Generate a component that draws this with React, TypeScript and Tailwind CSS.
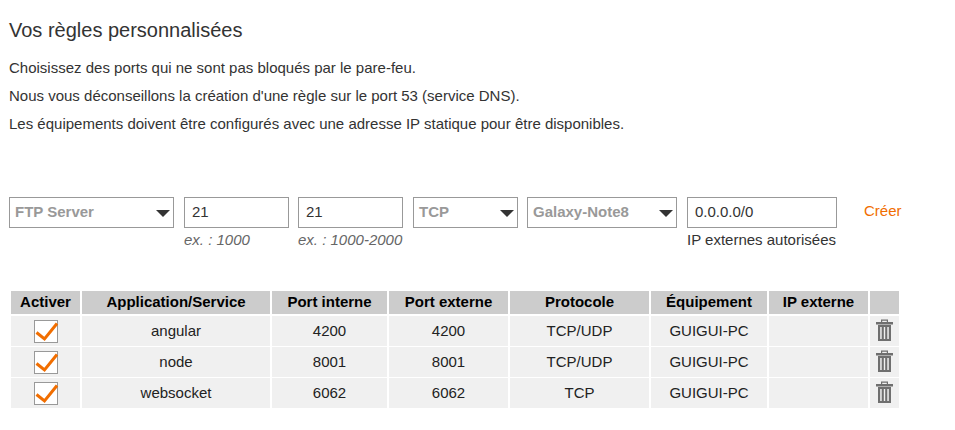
import React from 'react';

const font = "font-['Liberation_Sans',Arial,sans-serif]";

const rows = [
  { app: 'angular', intPort: '4200', extPort: '4200', proto: 'TCP/UDP', device: 'GUIGUI-PC' },
  { app: 'node', intPort: '8001', extPort: '8001', proto: 'TCP/UDP', device: 'GUIGUI-PC' },
  { app: 'websocket', intPort: '6062', extPort: '6062', proto: 'TCP', device: 'GUIGUI-PC' },
];

const headers = ['Activer', 'Application/Service', 'Port interne', 'Port externe', 'Protocole', 'Équipement', 'IP externe', ''];

const Arrow = () => (
  <span className="w-0 h-0 mt-[2px] border-x-[7.5px] border-x-transparent border-t-[7.5px] border-t-[#333]" />
);

const Select = ({ label, width }: { label: string; width: string }) => (
  <div className={`${width} h-[31px] border border-[#999] bg-white flex items-center justify-between pl-[5px] pr-[3px] shrink-0`}>
    <span className="text-[15px] font-bold text-[#999]">{label}</span>
    <Arrow />
  </div>
);

const Field = ({ value, hint, italic }: { value: string; hint: string; italic?: boolean }) => (
  <div className="flex flex-col">
    <div className="h-[31px] border border-[#999] bg-white flex items-center pl-[7px] text-[15px] text-[#333]">{value}</div>
    <span className={`text-[15px] leading-[17px] mt-[3px] whitespace-nowrap ${italic ? 'italic text-[#666]' : 'text-[#333]'}`}>{hint}</span>
  </div>
);

const CheckBox = () => (
  <div className="w-[24px] h-[23px] border border-[#999] bg-white">
    <svg width="24" height="22" viewBox="0 0 24 22" fill="none" className="overflow-visible">
      <path d="M1.5 11.5 L9.5 18 L22 2.5" stroke="#f16e00" strokeWidth="3" />
    </svg>
  </div>
);

const Trash = () => (
  <svg width="17" height="22" viewBox="0 0 17 22" fill="#6f6f6f" className="mb-[2px]">
    <path d="M5 3 V0.5 H12 V3 H17 V5.5 H0 V3 Z M6.2 3 H10.8 V1.7 H6.2 Z" fillRule="evenodd" />
    <path d="M2 6 H15 V22 H2 Z M4.2 8 V20 H5.7 V8 Z M7.8 8 V20 H9.2 V8 Z M11.3 8 V20 H12.8 V8 Z" fillRule="evenodd" />
  </svg>
);

const cols = 'grid grid-cols-[69px_188px_115px_119px_139px_116px_99px_29px] gap-x-[2px]';

export default function App() {
  return (
    <div className={`${font} w-[955px] h-[430px] bg-white text-[#333] overflow-hidden pt-[19px]`}>
      <h2 className="pl-[9px] text-[20px] leading-[22px]">Vos règles personnalisées</h2>
      <div className="pl-[9px] mt-[18px] text-[15px] flex flex-col gap-[11px] leading-[17px]">
        <p>Choisissez des ports qui ne sont pas bloqués par le pare-feu.</p>
        <p>Nous vous déconseillons la création d'une règle sur le port 53 (service DNS).</p>
        <p>Les équipements doivent être configurés avec une adresse IP statique pour être disponibles.</p>
      </div>

      {/* Formulaire */}
      <div className="flex items-start mt-[65px] pl-[9px]">
        <Select label="FTP Server" width="w-[165px]" />
        <div className="w-[105px] ml-[10px]"><Field value="21" hint="ex. : 1000" italic /></div>
        <div className="w-[105px] ml-[9px]"><Field value="21" hint="ex. : 1000-2000" italic /></div>
        <div className="ml-[10px]"><Select label="TCP" width="w-[105px]" /></div>
        <div className="ml-[9px]"><Select label="Galaxy-Note8" width="w-[150px]" /></div>
        <div className="w-[150px] ml-[10px]"><Field value="0.0.0.0/0" hint="IP externes autorisées" /></div>
        <span className="ml-[27px] mt-[3px] text-[15px] text-[#f16e00]">Créer</span>
      </div>

      {/* Tableau */}
      <div className="mt-[43px] ml-[11px] w-[889px] flex flex-col gap-y-[1px] text-[15px] text-[#222]">
        <div className={`${cols} h-[23px] mb-[1px]`}>
          {headers.map((h, i) => (
            <div key={i} className="bg-[#ccc] font-bold flex items-center justify-center text-black">{h}</div>
          ))}
        </div>
        {rows.map((r) => (
          <div key={r.app} className={`${cols} h-[30px]`}>
            <div className="bg-[#f0f0f0] flex items-center justify-center"><CheckBox /></div>
            <div className="bg-[#f0f0f0] flex items-center justify-center">{r.app}</div>
            <div className="bg-[#f0f0f0] flex items-center justify-center">{r.intPort}</div>
            <div className="bg-[#f0f0f0] flex items-center justify-center">{r.extPort}</div>
            <div className="bg-[#f0f0f0] flex items-center justify-center">{r.proto}</div>
            <div className="bg-[#f0f0f0] flex items-center justify-center">{r.device}</div>
            <div className="bg-[#f0f0f0]" />
            <div className="bg-[#f0f0f0] flex items-center justify-center"><Trash /></div>
          </div>
        ))}
      </div>
    </div>
  );
}
